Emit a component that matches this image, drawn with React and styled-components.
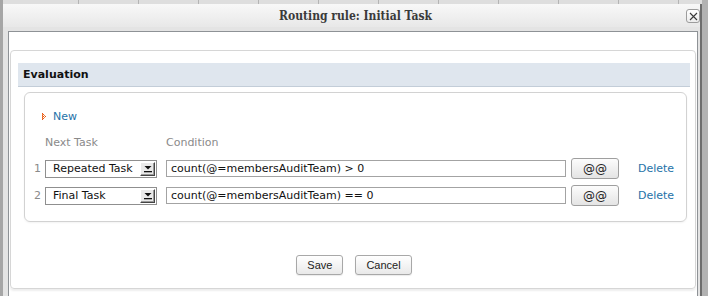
import React from "react";
import styled, { createGlobalStyle } from "styled-components";

const GlobalStyle = createGlobalStyle`
  html, body {
    margin: 0;
    padding: 0;
    height: 296px;
    overflow: hidden;
    background: #dedede;
    font-family: "DejaVu Sans", Verdana, sans-serif;
  }
`;

const rules = [
  { id: 1, task: "Repeated Task", condition: "count(@=membersAuditTeam) > 0" },
  { id: 2, task: "Final Task", condition: "count(@=membersAuditTeam) == 0" },
];

function NewIcon() {
  // little dotted play arrow
  const dots = [
    [0, 0, "#e8551e"], [0, 1, "#f08a3a"], [1, 1, "#e8551e"], [0, 2, "#e8551e"],
    [2, 2, "#f08a3a"], [0, 3, "#f08a3a"], [1, 3, "#e8551e"], [3, 3, "#e8551e"],
    [0, 4, "#e8551e"], [2, 4, "#f08a3a"], [0, 5, "#f08a3a"], [1, 5, "#e8551e"],
    [0, 6, "#e8551e"],
  ];
  return (
    <svg width="5" height="7" viewBox="0 0 5 7">
      {dots.map(([x, y, c], i) => (
        <rect key={i} x={x} y={y} width="1" height="1" fill={c} />
      ))}
    </svg>
  );
}

function App() {
  return (
    <>
      <GlobalStyle />
      <Page>
        <LeftEdge />
        <Dialog>
          <TitleBar>
            Routing rule: Initial Task
            <CloseButton aria-label="Close">
              <svg width="9" height="9" viewBox="0 0 9 9">
                <path d="M1 1 L8 8 M8 1 L1 8" stroke="#3a3a3a" strokeWidth="1.1" />
              </svg>
            </CloseButton>
          </TitleBar>
          <Content>
            <Panel>
              <SectionHeader>Evaluation</SectionHeader>
              <EvalBox>
                <NewRow>
                  <NewIcon />
                  <Link>New</Link>
                </NewRow>
                <ColumnHeads>
                  <span />
                  <HeadCell>Next Task</HeadCell>
                  <HeadCell>Condition</HeadCell>
                </ColumnHeads>
                <Rows>
                  {rules.map((r) => (
                    <RuleRow key={r.id}>
                      <RowNum>{r.id}</RowNum>
                      <FakeSelect>
                        <span>{r.task}</span>
                        <ArrowBtn>
                          <svg width="8" height="8" viewBox="0 0 8 8">
                            <path d="M0.5 1 L7.5 1 L4 4.5 Z" fill="#111" />
                            <rect x="0" y="6" width="8" height="1.3" fill="#111" />
                          </svg>
                        </ArrowBtn>
                      </FakeSelect>
                      <CondInput defaultValue={r.condition} />
                      <AtButton>@@</AtButton>
                      <Link>Delete</Link>
                    </RuleRow>
                  ))}
                </Rows>
              </EvalBox>
              <Footer>
                <Button>Save</Button>
                <Button>Cancel</Button>
              </Footer>
            </Panel>
          </Content>
        </Dialog>
        <RightEdge />
      </Page>
    </>
  );
}

const Page = styled.div`
  display: flex;
  height: 296px;
  overflow: hidden;
  background-color: #dedede;
  background-image: repeating-linear-gradient(
    to right,
    transparent 0,
    transparent 59px,
    #b4b4b4 59px,
    #b4b4b4 60px
  );
  background-position: 19px 0;
`;

const LeftEdge = styled.div`
  width: 3px;
  background: #a6a6a6;
`;

const RightEdge = styled.div`
  width: 6px;
  background: #b2b2b2;
`;

const Dialog = styled.div`
  flex: 1;
  margin-top: 4px;
  display: flex;
  flex-direction: column;
  background: #e4e4e4;
  border-right: 2px solid #6d6d6d;
`;

const TitleBar = styled.div`
  position: relative;
  height: 23px;
  display: flex;
  align-items: center;
  justify-content: center;
  padding-left: 8px;
  background: linear-gradient(#f8f8f8, #e8e8e8);
  font-family: "DejaVu Serif Condensed", "DejaVu Serif", serif;
  font-stretch: condensed;
  font-weight: bold;
  font-size: 12px;
  color: #3a3a3a;
`;

const CloseButton = styled.button`
  position: absolute;
  right: 0;
  top: 5px;
  width: 14px;
  height: 14px;
  padding: 0;
  display: flex;
  align-items: center;
  justify-content: center;
  border: 1px solid #9c9c9c;
  border-radius: 3px;
  background: linear-gradient(#ffffff, #ececec);
`;

const Content = styled.div`
  flex: 1;
  margin: 4px 2px 0 5px;
  padding: 18px 1px 0 1px;
  background: #fff;
  border: 1px solid #8e9296;
  border-bottom: none;
`;

const Panel = styled.div`
  border: 1px solid #d6d6d6;
  border-radius: 4px;
  padding: 12px 5px 13px 7px;
  box-shadow: 0 2px 2px rgba(0, 0, 0, 0.07);
`;

const SectionHeader = styled.div`
  height: 23px;
  line-height: 23px;
  padding-left: 5px;
  background: #dfe6ee;
  border-bottom: 1px solid #c3cdd8;
  font-weight: bold;
  font-size: 11px;
  color: #111;
`;

const EvalBox = styled.div`
  margin: 5px 3px 0 6px;
  padding: 15px 0 15px 9px;
  border: 1px solid #d2d2d2;
  border-radius: 6px;
  box-shadow: 0 1px 2px rgba(0, 0, 0, 0.05);
  font-size: 11px;
`;

const NewRow = styled.div`
  height: 16px;
  display: flex;
  align-items: center;
  gap: 6px;
  padding-left: 8px;
`;

const Link = styled.a`
  color: #1f72a8;
  font-size: 11px;
  cursor: pointer;
`;

const grid = `
  display: grid;
  grid-template-columns: 11px 121px 405px 67px auto;
  align-items: center;
`;

const ColumnHeads = styled.div`
  ${grid}
  margin-top: 10px;
  height: 16px;
`;

const HeadCell = styled.span`
  color: #8a8a8a;
`;

const Rows = styled.div`
  margin-top: 8px;
  display: flex;
  flex-direction: column;
  gap: 6px;
`;

const RuleRow = styled.div`
  ${grid}
  height: 21px;
`;

const RowNum = styled.span`
  color: #8a8a8a;
  text-align: right;
  padding-right: 4px;
`;

const FakeSelect = styled.div`
  box-sizing: border-box;
  width: 112px;
  height: 18px;
  display: flex;
  align-items: center;
  justify-content: space-between;
  padding: 0 1px 0 7px;
  border: 1px solid #8f8f8f;
  background: #fff;
  color: #111;
`;

const ArrowBtn = styled.span`
  box-sizing: border-box;
  width: 15px;
  height: 14px;
  display: flex;
  align-items: center;
  justify-content: center;
  background: #e9e9e9;
  border-top: 1px solid #fff;
  border-left: 1px solid #fff;
  border-right: 1px solid #444;
  border-bottom: 1px solid #444;
  box-shadow: inset -1px -1px #9a9a9a;
`;

const CondInput = styled.input`
  box-sizing: border-box;
  width: 400px;
  height: 17px;
  padding: 0 4px;
  border: 1px solid #a3a3a3;
  font-family: "DejaVu Sans", Verdana, sans-serif;
  font-size: 11px;
  color: #111;
  outline: none;
`;

const AtButton = styled.button`
  box-sizing: border-box;
  width: 48px;
  height: 21px;
  padding: 0;
  border: 1px solid #9f9f9f;
  border-radius: 3px;
  background: linear-gradient(#fcfcfc, #e4e4e4);
  font-family: "DejaVu Sans", Verdana, sans-serif;
  font-size: 12px;
  color: #222;
`;

const Footer = styled.div`
  margin-top: 33px;
  display: flex;
  justify-content: center;
  gap: 12px;
`;

const Button = styled.button`
  height: 20px;
  padding: 0 10px;
  border: 1px solid #a8a8a8;
  border-radius: 3px;
  background: linear-gradient(#ffffff, #e9e9e9);
  box-shadow: 0 1px 1px rgba(0, 0, 0, 0.08);
  font-family: "Liberation Sans", Arial, sans-serif;
  font-size: 11px;
  color: #222;
`;

export default App;
